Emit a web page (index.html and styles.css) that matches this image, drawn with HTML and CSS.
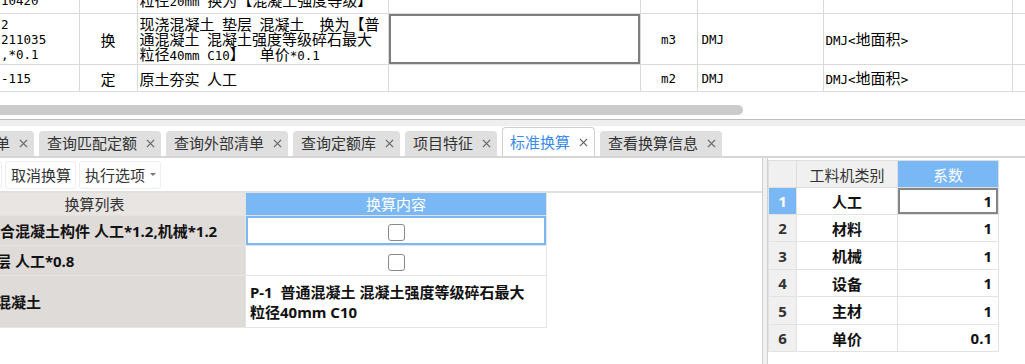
FILE: index.html
```html
<!DOCTYPE html>
<html lang="zh-CN">
<head>
  <meta charset="UTF-8">
  <meta name="viewport" content="width=device-width, initial-scale=1.0">
  <title>标准换算</title>
  <link rel="stylesheet" href="styles.css">
</head>
<body>

<!-- upper grid, scrolled so the first row is cut off -->
<div class="grid-wrap">
  <table class="grid">
    <colgroup>
      <col class="c-code"><col class="c-type"><col class="c-name"><col class="c-spec">
      <col class="c-unit"><col class="c-expr"><col class="c-qty"><col class="c-more">
    </colgroup>
    <tr class="r-short">
      <td class="code">10420</td>
      <td></td>
      <td>粒径<span class="mono">20mm</span>&ensp;换为【混凝土强度等级】</td>
      <td></td><td></td><td></td><td></td><td></td>
    </tr>
    <tr class="r-tall">
      <td class="code">2<br>211035<br>,*0.1</td>
      <td class="mid">换</td>
      <td>现浇混凝土&ensp;垫层&ensp;混凝土&ensp;&ensp;换为【普<br>通混凝土&ensp;混凝土强度等级碎石最大<br>粒径<span class="mono">40mm C10</span>】&ensp;&ensp;单价<span class="mono">*0.1</span></td>
      <td class="edit"></td>
      <td class="mid mono">m3</td>
      <td class="mono">DMJ</td>
      <td><span class="mono">DMJ&lt;</span>地面积<span class="mono">&gt;</span></td>
      <td></td>
    </tr>
    <tr class="r-short">
      <td class="code">-115</td>
      <td class="mid">定</td>
      <td>原土夯实&ensp;人工</td>
      <td></td>
      <td class="mid mono">m2</td>
      <td class="mono">DMJ</td>
      <td><span class="mono">DMJ&lt;</span>地面积<span class="mono">&gt;</span></td>
      <td></td>
    </tr>
  </table>
</div>

<div class="hscroll"><div class="thumb"></div></div>
<div class="divider"></div>

<div class="tabs">
  <div class="tab cut">查询清单 <svg class="x" viewBox="0 0 10 10"><path d="M1 1L9 9M9 1L1 9"/></svg></div>
  <div class="tab">查询匹配定额 <svg class="x" viewBox="0 0 10 10"><path d="M1 1L9 9M9 1L1 9"/></svg></div>
  <div class="tab">查询外部清单 <svg class="x" viewBox="0 0 10 10"><path d="M1 1L9 9M9 1L1 9"/></svg></div>
  <div class="tab">查询定额库 <svg class="x" viewBox="0 0 10 10"><path d="M1 1L9 9M9 1L1 9"/></svg></div>
  <div class="tab">项目特征 <svg class="x" viewBox="0 0 10 10"><path d="M1 1L9 9M9 1L1 9"/></svg></div>
  <div class="tab active">标准换算 <svg class="x" viewBox="0 0 10 10"><path d="M1 1L9 9M9 1L1 9"/></svg></div>
  <div class="tab">查看换算信息 <svg class="x" viewBox="0 0 10 10"><path d="M1 1L9 9M9 1L1 9"/></svg></div>
</div>

<div class="panes">
  <div class="left">
    <div class="toolbar">
      <div class="btn cut">应用换算</div>
      <div class="btn">取消换算</div>
      <div class="btn">执行选项 <span class="caret"></span></div>
    </div>

    <table class="conv">
      <colgroup><col class="c-list"><col class="c-content"></colgroup>
      <tr>
        <th>换算列表</th>
        <th class="blue">换算内容</th>
      </tr>
      <tr class="r1">
        <td class="item first">拌合混凝土构件 人工*1.2,机械*1.2</td>
        <td class="val sel"><span class="chk"></span></td>
      </tr>
      <tr class="r2">
        <td class="item">垫层 人工*0.8</td>
        <td class="val"><span class="chk"></span></td>
      </tr>
      <tr class="r3">
        <td class="item">换混凝土</td>
        <td class="desc">P-1&nbsp; 普通混凝土 混凝土强度等级碎石最大<br>粒径40mm C10</td>
      </tr>
    </table>
  </div>

  <div class="sep"></div>

  <div class="right">
    <table class="coef">
      <colgroup><col class="c-no"><col class="c-kind"><col class="c-rate"></colgroup>
      <tr>
        <th></th>
        <th>工料机类别</th>
        <th class="blue">系数</th>
      </tr>
      <tr><td class="no on">1</td><td>人工</td><td class="num cur">1</td></tr>
      <tr><td class="no">2</td><td>材料</td><td class="num">1</td></tr>
      <tr class="tall"><td class="no">3</td><td>机械</td><td class="num">1</td></tr>
      <tr><td class="no">4</td><td>设备</td><td class="num">1</td></tr>
      <tr class="tall"><td class="no">5</td><td>主材</td><td class="num">1</td></tr>
      <tr><td class="no">6</td><td>单价</td><td class="num">0.1</td></tr>
    </table>
  </div>
</div>

</body>
</html>
```

FILE: styles.css
```css
body {
  margin: 0;
  width: 1025px;
  height: 364px;
  overflow: hidden;
  background: #fff;
  font-family: "Noto Sans", "Noto Sans CJK SC", sans-serif;
  color: #222;
}

/* upper grid */
.grid-wrap {
  height: 92px;
  overflow: hidden;
}

.grid {
  border-collapse: collapse;
  table-layout: fixed;
  width: 1052px;
  margin-top: -14px;
  font-family: "Noto Sans CJK SC", sans-serif;
  font-size: 15px;
  line-height: 15px;
  color: #000;
}

.grid col.c-code { width: 79px; }
.grid col.c-type { width: 58px; }
.grid col.c-name { width: 251px; }
.grid col.c-spec { width: 252px; }
.grid col.c-unit { width: 57px; }
.grid col.c-expr { width: 126px; }
.grid col.c-qty { width: 189px; }
.grid col.c-more { width: 40px; }

.grid td {
  border: 1px solid #dadada;
  padding: 0 2px;
  vertical-align: middle;
  white-space: nowrap;
  overflow: hidden;
}

.grid td:first-child {
  border-left: 0;
  padding-left: 1px;
}

.grid .r-short td { height: 26px; }
.grid .r-tall td { height: 50px; }

.grid .mid { text-align: center; }
.grid td.mono { padding-left: 4px; }
.grid td.mid.mono { padding-left: 2px; }

.mono, .code {
  font-family: "DejaVu Sans Mono", monospace;
  font-size: 12.5px;
}

.grid .edit {
  box-shadow: inset 0 0 0 2px #7d7d7d;
}

/* horizontal scrollbar */
.hscroll {
  height: 27px;
  padding-top: 13px;
  box-sizing: border-box;
}

.thumb {
  width: 753px;
  height: 10px;
  margin-left: -10px;
  background: #cbcbcb;
  border-radius: 5px;
}

.divider {
  height: 6px;
  border-top: 1px solid #bdbdbd;
  background: #efefef;
}

/* tabs */
.tabs {
  display: flex;
  align-items: flex-end;
  gap: 5px;
  height: 30px;
  border-bottom: 2px solid #d6d6d6;
}

.tab {
  display: flex;
  align-items: center;
  gap: 9px;
  height: 25px;
  padding: 0 6px 0 8px;
  background: #dfdfdf;
  border-radius: 4px 4px 0 0;
  font-size: 15px;
  line-height: 1;
  color: #333;
  white-space: nowrap;
  box-sizing: border-box;
}

.tab.cut {
  margin-left: -58px;
}

.tab.active {
  height: 29px;
  padding: 0 6px 0 7px;
  background: #fff;
  border: 1px solid #d0d0d0;
  border-bottom: 0;
  color: #3b8bea;
}

.x {
  width: 9px;
  height: 9px;
  fill: none;
  stroke: #666;
  stroke-width: 1.4;
}

/* lower panes */
.panes {
  display: flex;
  height: 206px;
}

.left {
  width: 762px;
  overflow: hidden;
}

.sep {
  width: 4px;
  border-left: 1px solid #d0d0d0;
  border-right: 1px solid #d0d0d0;
  background: #f1f1f1;
}

.right {
  flex: 1;
  padding-top: 2px;
}

.toolbar {
  display: flex;
  align-items: center;
  gap: 3px;
  height: 33px;
  border-bottom: 2px solid #e0e0e0;
}

.btn {
  display: flex;
  align-items: center;
  gap: 5px;
  height: 26px;
  padding: 0 4px 0 5px;
  border: 1px solid #eeeeee;
  border-radius: 3px;
  font-size: 15px;
  color: #333;
  white-space: nowrap;
}

.btn.cut {
  margin-left: -69px;
}

.caret {
  width: 0;
  height: 0;
  border-left: 3px solid transparent;
  border-right: 3px solid transparent;
  border-top: 3px solid #777;
}

/* conversion list */
.conv {
  border-collapse: collapse;
  table-layout: fixed;
  width: 603px;
  margin-left: -57px;
  font-size: 15px;
}

.conv col.c-list { width: 302px; }
.conv col.c-content { width: 301px; }

.conv th {
  height: 22px;
  padding: 0;
  background: #e8e5e3;
  border: 1px solid #e2e2e2;
  border-top: 0;
  font-weight: 400;
  color: #333;
  line-height: 20px;
}

.conv th.blue {
  background: #7ab7f5;
  color: #fff;
}

.conv td {
  padding: 0;
  border: 1px solid #e4e4e4;
  font-weight: 700;
  color: #111;
  white-space: nowrap;
  overflow: hidden;
}

.conv .r1 td, .conv .r2 td { height: 29px; }
.conv .r3 td { height: 51px; }

.conv td.item {
  background: #dfdbd9;
  padding-left: 37px;
}

.conv td.item.first {
  padding-left: 41px;
}

.conv td.val {
  text-align: center;
  background: #fff;
}

.conv td.sel {
  box-shadow: inset 0 0 0 2px #7ab7f5;
}

.conv td.desc {
  padding-left: 4px;
  line-height: 20px;
}

.chk {
  display: inline-block;
  width: 15px;
  height: 15px;
  border: 1px solid #8a8a8a;
  border-radius: 3px;
  vertical-align: middle;
}

/* coefficient table */
.coef {
  border-collapse: collapse;
  table-layout: fixed;
  width: 230px;
  font-size: 15px;
}

.coef col.c-no { width: 28px; }
.coef col.c-kind { width: 101px; }
.coef col.c-rate { width: 101px; }

.coef th {
  height: 26px;
  padding: 0;
  background: #f0f0f0;
  border: 1px solid #dedede;
  font-weight: 400;
  color: #333;
}

.coef th.blue {
  background: #7ab7f5;
  color: #fff;
}

.coef td {
  height: 26px;
  padding: 0;
  border: 1px solid #e2e2e2;
  text-align: center;
  font-weight: 700;
  color: #111;
}

.coef tr.tall td { height: 27px; }

.coef td.no {
  background: #f0f0f0;
  color: #333;
}

.coef td.no.on {
  background: #7ab7f5;
  color: #fff;
}

.coef td.num {
  text-align: right;
  padding-right: 6px;
}

.coef td.cur {
  box-shadow: inset 0 0 0 2px #868686;
}
```
